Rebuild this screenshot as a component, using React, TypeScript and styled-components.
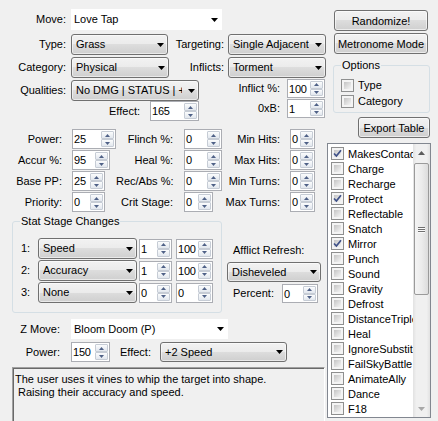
import React from 'react';
import styled, { createGlobalStyle } from 'styled-components';

const GlobalStyle = createGlobalStyle`
  html, body {
    margin: 0;
    padding: 0;
    background: #f0f0f0;
  }
  body {
    font-family: "Liberation Sans", Arial, sans-serif;
    font-size: 11px;
    color: #000;
  }
  * {
    box-sizing: border-box;
  }
`;

const Window = styled.div`
  display: flex;
  width: 438px;
  height: 421px;
  overflow: hidden;
  background: #f0f0f0;
`;

const LeftPane = styled.div`
  display: flex;
  flex-direction: column;
  width: 327px;
  flex-shrink: 0;
  padding-top: 9px;
`;

const RightPane = styled.div`
  display: flex;
  flex-direction: column;
  align-items: flex-start;
  width: 104px;
  flex-shrink: 0;
  padding-top: 10px;
`;

const Row = styled.div<{ $mt?: number; $ml?: number; $h?: number }>`
  display: flex;
  align-items: center;
  flex-shrink: 0;
  height: ${p => p.$h ?? 21}px;
  margin-top: ${p => p.$mt ?? 0}px;
  margin-left: ${p => p.$ml ?? 0}px;
`;

const Label = styled.span<{ $w?: number; $mr?: number; $ml?: number; $left?: boolean }>`
  flex-shrink: 0;
  width: ${p => (p.$w ? `${p.$w}px` : 'auto')};
  margin-right: ${p => p.$mr ?? 0}px;
  margin-left: ${p => p.$ml ?? 0}px;
  text-align: ${p => (p.$left ? 'left' : 'right')};
  white-space: nowrap;
  line-height: 13px;
`;

/* ---------- combo boxes ---------- */

const ComboFrame = styled.div<{ $w: number; $h?: number; $flat?: boolean }>`
  display: flex;
  align-items: center;
  flex-shrink: 0;
  width: ${p => p.$w}px;
  height: ${p => p.$h ?? 21}px;
  padding-left: ${p => (p.$flat ? 2 : 4)}px;
  border: 1px solid ${p => (p.$flat ? '#ffffff' : '#707070')};
  border-radius: ${p => (p.$flat ? 0 : 3)}px;
  background: ${p =>
    p.$flat
      ? '#ffffff'
      : 'linear-gradient(#f2f2f2 0%, #ebebeb 50%, #dddddd 50%, #cfcfcf 100%)'};
  box-shadow: ${p => (p.$flat ? 'none' : 'inset 0 0 0 1px rgba(255, 255, 255, 0.55)')};
`;

const ComboText = styled.span`
  flex: 1;
  min-width: 0;
  margin-right: 3px;
  overflow: hidden;
  white-space: nowrap;
  line-height: 13px;
`;

const ArrowBox = styled.span`
  display: flex;
  align-items: center;
  justify-content: center;
  width: 13px;
  flex-shrink: 0;
`;

const DropArrow = () => (
  <svg width="7" height="4" viewBox="0 0 7 4">
    <polygon points="0,0 7,0 3.5,4" fill="#000" />
  </svg>
);

const Combo = ({ w, h, flat, value }: { w: number; h?: number; flat?: boolean; value: string }) => (
  <ComboFrame $w={w} $h={h} $flat={flat}>
    <ComboText>{value}</ComboText>
    <ArrowBox>
      <DropArrow />
    </ArrowBox>
  </ComboFrame>
);

/* ---------- numeric up/down ---------- */

const NumFrame = styled.div<{ $w: number; $h?: number }>`
  display: flex;
  flex-shrink: 0;
  width: ${p => p.$w}px;
  height: ${p => p.$h ?? 20}px;
  border: 1px solid #abadb3;
  background: #fff;
`;

const NumValue = styled.span`
  display: flex;
  align-items: center;
  flex: 1;
  min-width: 0;
  padding-left: 1px;
  overflow: hidden;
  font-size: 11px;
  letter-spacing: -0.2px;
`;

const Spin = styled.span`
  display: flex;
  flex-direction: column;
  width: 14px;
  flex-shrink: 0;
  padding: 1px 1px 1px 0;
`;

const SpinButton = styled.span`
  display: flex;
  align-items: center;
  justify-content: center;
  flex: 1;
  border: 1px solid #c6ccd5;
  border-radius: 1px;
  background: linear-gradient(#fbfcfd, #e2e7ee);
`;

const SpinArrow = ({ up }: { up?: boolean }) => (
  <svg width="5" height="3" viewBox="0 0 5 3">
    <polygon points={up ? '0,3 5,3 2.5,0' : '0,0 5,0 2.5,3'} fill="#4f6187" />
  </svg>
);

const Numeric = ({ w, h, value }: { w: number; h?: number; value: string }) => (
  <NumFrame $w={w} $h={h}>
    <NumValue>{value}</NumValue>
    <Spin>
      <SpinButton>
        <SpinArrow up />
      </SpinButton>
      <SpinButton>
        <SpinArrow />
      </SpinButton>
    </Spin>
  </NumFrame>
);

/* ---------- buttons, groups, check boxes ---------- */

const Button = styled.div<{ $w: number; $ml: number; $mt: number }>`
  display: flex;
  align-items: center;
  justify-content: center;
  flex-shrink: 0;
  width: ${p => p.$w}px;
  height: 21px;
  margin: ${p => p.$mt}px 0 0 ${p => p.$ml}px;
  border: 1px solid #707070;
  border-radius: 3px;
  background: linear-gradient(#f2f2f2 0%, #ebebeb 50%, #dddddd 50%, #cfcfcf 100%);
  box-shadow: inset 0 0 0 1px rgba(255, 255, 255, 0.6);
  white-space: nowrap;
`;

const Group = styled.fieldset<{ $w: number; $h: number; $ml: number; $mt: number }>`
  flex-shrink: 0;
  width: ${p => p.$w}px;
  height: ${p => p.$h}px;
  margin: ${p => p.$mt}px 0 0 ${p => p.$ml}px;
  padding: 0;
  border: 1px solid #d5dfe5;
  border-radius: 3px;
  min-width: 0;
`;

const Legend = styled.legend`
  margin-left: 7px;
  padding: 0 1px;
  line-height: 13px;
  font-size: 11px;
`;

const GroupBody = styled.div<{ $pt: number; $pl: number }>`
  display: flex;
  flex-direction: column;
  padding: ${p => p.$pt}px 0 0 ${p => p.$pl}px;
`;

const CheckBox = styled.span`
  display: flex;
  align-items: center;
  justify-content: center;
  flex-shrink: 0;
  width: 13px;
  height: 13px;
  padding: 2px;
  border: 1px solid #8e8f8f;
  background: linear-gradient(135deg, #c4c4c4, #f5f5f5) content-box, #f4f4f4;
  position: relative;
`;

const CheckMark = styled.svg`
  position: absolute;
  left: 0;
  top: 0;
`;

const Check = ({ checked }: { checked?: boolean }) => (
  <CheckBox>
    {checked && (
      <CheckMark width="11" height="11" viewBox="0 0 11 11">
        <path d="M2 5.5 L4.4 8 L9 2.2" stroke="#3f5188" strokeWidth="1.7" fill="none" />
      </CheckMark>
    )}
  </CheckBox>
);

const CheckRow = styled.div`
  display: flex;
  align-items: center;
  gap: 4px;
  height: 16px;
  white-space: nowrap;
`;

/* ---------- left side sections ---------- */

const Split = styled.div`
  display: flex;
  align-items: flex-start;
  flex-shrink: 0;
  margin-top: 2px;
`;

const SubColumn = styled.div<{ $w: number; $mt?: number }>`
  display: flex;
  flex-direction: column;
  width: ${p => p.$w}px;
  margin-top: ${p => p.$mt ?? 0}px;
`;

const StatsGrid = styled.div`
  display: flex;
  flex-direction: column;
  gap: 1px;
  margin-top: 8px;
  flex-shrink: 0;
`;

const Cell = styled.div<{ $w: number }>`
  display: flex;
  width: ${p => p.$w}px;
  flex-shrink: 0;
`;

const StageSection = styled.div`
  display: flex;
  align-items: flex-start;
  flex-shrink: 0;
  margin-top: 3px;
`;

const StageRows = styled.div`
  display: flex;
  flex-direction: column;
  gap: 1px;
`;

const AfflictColumn = styled.div`
  display: flex;
  flex-direction: column;
  width: 94px;
  margin-left: 5px;
  padding-top: 29px;
`;

const Description = styled.div`
  flex: 1;
  width: 313px;
  margin: 5px 0 0 12px;
  padding: 5px 2px;
  border-top: 1px solid #a0a0a0;
  border-left: 1px solid #a0a0a0;
  border-right: 1px solid #ffffff;
  box-shadow: inset 1px 1px 0 #696969;
  line-height: 13px;
  white-space: pre;
  overflow: hidden;
`;

/* ---------- checked list box ---------- */

const ListBox = styled.div`
  display: flex;
  flex-shrink: 0;
  width: 104px;
  height: 275px;
  margin-top: 5px;
  border: 1px solid #828790;
  background: #fff;
`;

const ListItems = styled.div`
  flex: 1;
  min-width: 0;
  padding-top: 2px;
  overflow: hidden;
`;

const ListItem = styled.div`
  display: flex;
  align-items: center;
  gap: 4px;
  height: 15px;
  padding-left: 3px;
  white-space: nowrap;
`;

const ScrollBar = styled.div`
  display: flex;
  flex-direction: column;
  width: 17px;
  flex-shrink: 0;
  background: linear-gradient(90deg, #e2e2e2, #f0f0f0 20%, #f0f0f0 80%, #e2e2e2);
`;

const ScrollArrow = styled.div`
  display: flex;
  align-items: center;
  justify-content: center;
  height: 17px;
  flex-shrink: 0;
`;

const Thumb = styled.div`
  display: flex;
  flex-direction: column;
  align-items: center;
  justify-content: center;
  gap: 1px;
  height: 132px;
  margin: 2px 1px 0;
  border: 1px solid #9a9a9a;
  border-radius: 2px;
  background: linear-gradient(90deg, #f4f4f4, #ececec 50%, #dcdcdc);
`;

const Grip = styled.span`
  width: 7px;
  height: 1px;
  background: #6f6f6f;
  box-shadow: 0 1px 0 #fafafa;
`;

const ScrollSpacer = styled.div`
  flex: 1;
`;

const ScrollGlyph = ({ up, color }: { up?: boolean; color: string }) => (
  <svg width="7" height="4" viewBox="0 0 7 4">
    <polygon points={up ? '0,4 7,4 3.5,0' : '0,0 7,0 3.5,4'} fill={color} />
  </svg>
);

const flags: [string, boolean][] = [
  ['MakesContact', true],
  ['Charge', false],
  ['Recharge', false],
  ['Protect', true],
  ['Reflectable', false],
  ['Snatch', false],
  ['Mirror', true],
  ['Punch', false],
  ['Sound', false],
  ['Gravity', false],
  ['Defrost', false],
  ['DistanceTriple', false],
  ['Heal', false],
  ['IgnoreSubstitute', false],
  ['FailSkyBattle', false],
  ['AnimateAlly', false],
  ['Dance', false],
  ['F18', false],
];

const stats: [string, string, number, string, string, number, string, string][] = [
  ['Power:', '25', 44, 'Flinch %:', '0', 38, 'Min Hits:', '0'],
  ['Accur %:', '95', 38, 'Heal %:', '0', 38, 'Max Hits:', '0'],
  ['Base PP:', '25', 33, 'Rec/Abs %:', '0', 38, 'Min Turns:', '0'],
  ['Priority:', '0', 33, 'Crit Stage:', '0', 29, 'Max Turns:', '0'],
];

const stages: [string, string, string, string][] = [
  ['1:', 'Speed', '1', '100'],
  ['2:', 'Accuracy', '1', '100'],
  ['3:', 'None', '0', '0'],
];

export default function App() {
  return (
    <>
      <GlobalStyle />
      <Window>
        <LeftPane>
          <Row>
            <Label $w={66} $mr={5}>Move:</Label>
            <Combo flat w={151} value="Love Tap" />
          </Row>
          <Row $mt={4}>
            <Label $w={66} $mr={5}>Type:</Label>
            <Combo w={97} value="Grass" />
            <Label $w={56} $mr={4}>Targeting:</Label>
            <Combo w={98} value="Single Adjacent" />
          </Row>
          <Row $mt={2}>
            <Label $w={66} $mr={5}>Category:</Label>
            <Combo w={98} value="Physical" />
            <Label $w={55} $mr={4}>Inflicts:</Label>
            <Combo w={98} value="Torment" />
          </Row>

          <Split>
            <SubColumn $w={199}>
              <Row>
                <Label $w={66} $mr={5}>Qualities:</Label>
                <Combo w={128} value="No DMG | STATUS | +Stat" />
              </Row>
              <Row $h={20}>
                <Label $w={140} $mr={10}>Effect:</Label>
                <Numeric w={49} value="165" />
              </Row>
            </SubColumn>
            <SubColumn $w={128} $mt={-1}>
              <Row $h={19}>
                <Label $w={81} $mr={7}>Inflict %:</Label>
                <Numeric w={38} h={19} value="100" />
              </Row>
              <Row $h={19} $mt={1}>
                <Label $w={81} $mr={7}>0xB:</Label>
                <Numeric w={38} h={19} value="1" />
              </Row>
            </SubColumn>
          </Split>

          <StatsGrid>
            {stats.map(([l1, v1, w1, l2, v2, w2, l3, v3]) => (
              <Row key={l1} $h={20}>
                <Label $w={62} $mr={10}>{l1}</Label>
                <Cell $w={44}>
                  <Numeric w={w1} value={v1} />
                </Cell>
                <Label $w={57} $mr={11}>{l2}</Label>
                <Cell $w={38}>
                  <Numeric w={w2} value={v2} />
                </Cell>
                <Label $w={58} $mr={10}>{l3}</Label>
                <Numeric w={25} value={v3} />
              </Row>
            ))}
          </StatsGrid>

          <StageSection>
            <Group $w={210} $h={98} $ml={12} $mt={0}>
              <Legend>Stat Stage Changes</Legend>
              <GroupBody $pt={10} $pl={8}>
                <StageRows>
                  {stages.map(([n, stat, amount, chance]) => (
                    <Row key={n}>
                      <Label $w={17} $left>{n}</Label>
                      <Combo w={99} value={stat} />
                      <Row $ml={2} $h={21}>
                        <Numeric w={33} value={amount} />
                      </Row>
                      <Row $ml={4} $h={21}>
                        <Numeric w={37} value={chance} />
                      </Row>
                    </Row>
                  ))}
                </StageRows>
              </GroupBody>
            </Group>
            <AfflictColumn>
              <Label $left $ml={6}>Afflict Refresh:</Label>
              <Row $mt={5} $h={20}>
                <Combo w={94} h={20} value="Disheveled" />
              </Row>
              <Row $mt={2} $h={19}>
                <Label $w={49} $ml={6} $left>Percent:</Label>
                <Numeric w={36} h={19} value="0" />
              </Row>
            </AfflictColumn>
          </StageSection>

          <Row $mt={6} $h={20}>
            <Label $w={60} $mr={11}>Z Move:</Label>
            <Combo flat w={157} h={20} value="Bloom Doom (P)" />
          </Row>
          <Row $mt={3} $h={20}>
            <Label $w={60} $mr={11}>Power:</Label>
            <Numeric w={39} value="150" />
            <Label $w={40} $ml={10} $left>Effect:</Label>
            <Combo w={127} h={20} value="+2 Speed" />
          </Row>

          <Description>
            {'The user uses it vines to whip the target into shape.\n Raising their accuracy and speed.'}
          </Description>
        </LeftPane>

        <RightPane>
          <Button $w={94} $ml={7} $mt={0}>Randomize!</Button>
          <Button $w={94} $ml={7} $mt={2}>Metronome Mode</Button>
          <Group $w={97} $h={54} $ml={6} $mt={5}>
            <Legend>Options</Legend>
            <GroupBody $pt={5} $pl={7}>
              <CheckRow>
                <Check />
                Type
              </CheckRow>
              <CheckRow>
                <Check />
                Category
              </CheckRow>
            </GroupBody>
          </Group>
          <Button $w={72} $ml={31} $mt={4}>Export Table</Button>
          <ListBox>
            <ListItems>
              {flags.map(([name, on]) => (
                <ListItem key={name}>
                  <Check checked={on} />
                  {name}
                </ListItem>
              ))}
            </ListItems>
            <ScrollBar>
              <ScrollArrow>
                <ScrollGlyph up color="#5c5c5c" />
              </ScrollArrow>
              <Thumb>
                <Grip />
                <Grip />
                <Grip />
              </Thumb>
              <ScrollSpacer />
              <ScrollArrow>
                <ScrollGlyph color="#a8a8a8" />
              </ScrollArrow>
            </ScrollBar>
          </ListBox>
        </RightPane>
      </Window>
    </>
  );
}
